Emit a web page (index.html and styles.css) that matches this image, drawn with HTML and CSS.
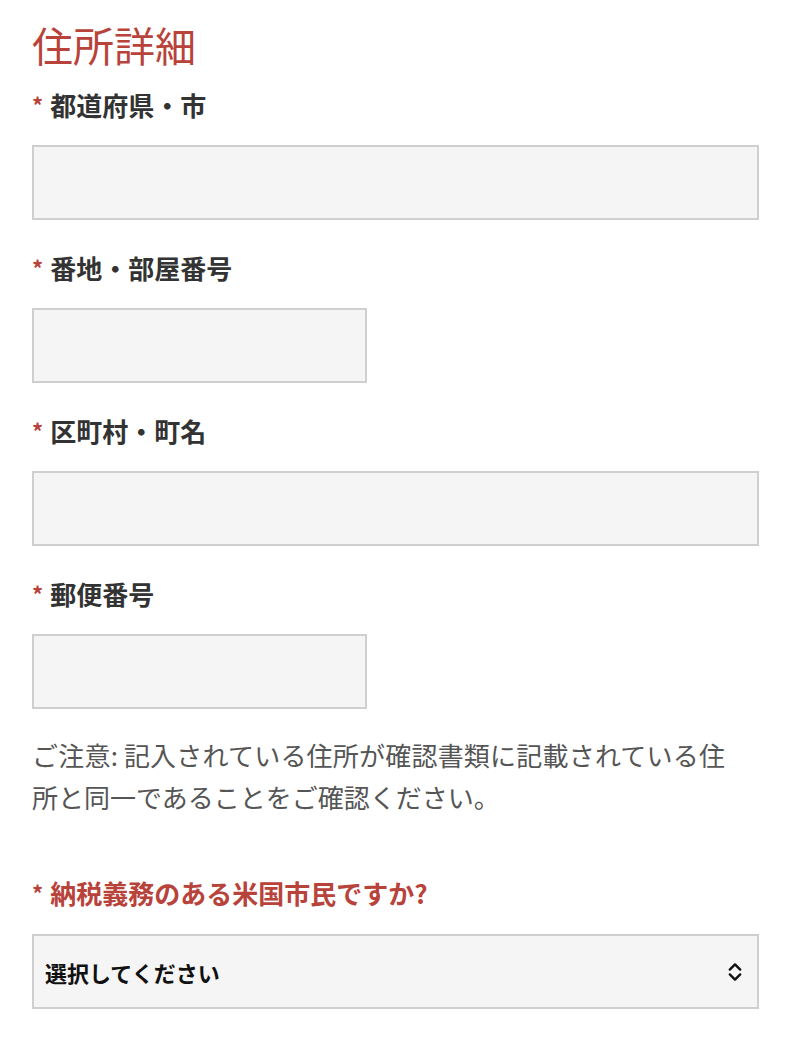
FILE: index.html
```html
<!DOCTYPE html>
<html lang="ja">
<head>
<meta charset="utf-8">
<link rel="stylesheet" href="styles.css">
</head>
<body>
<main class="form">
  <h1 class="title">住所詳細</h1>

  <div class="field">
    <label class="label"><span class="req">*</span>都道府県・市</label>
    <div class="input full"></div>
  </div>

  <div class="field">
    <label class="label"><span class="req">*</span>番地・部屋番号</label>
    <div class="input half"></div>
  </div>

  <div class="field">
    <label class="label"><span class="req">*</span>区町村・町名</label>
    <div class="input full"></div>
  </div>

  <div class="field">
    <label class="label"><span class="req">*</span>郵便番号</label>
    <div class="input half"></div>
  </div>

  <p class="note">ご注意: 記入されている住所が確認書類に記載されている住所と同一であることをご確認ください。</p>

  <div class="field field-select">
    <label class="label label-red"><span class="req">*</span>納税義務のある米国市民ですか?</label>
    <div class="input full select">
      <span class="select-text">選択してください</span>
      <svg class="chev" width="14" height="20" viewBox="0 0 14 20" aria-hidden="true">
        <path d="M1.8 7.6 L7 2.4 L12.2 7.6" fill="none" stroke="#111" stroke-width="2.4" stroke-linecap="round" stroke-linejoin="round"/>
        <path d="M1.8 12.4 L7 17.6 L12.2 12.4" fill="none" stroke="#111" stroke-width="2.4" stroke-linecap="round" stroke-linejoin="round"/>
      </svg>
    </div>
  </div>
</main>
</body>
</html>
```

FILE: styles.css
```css
html, body {
  margin: 0;
  padding: 0;
  background: #ffffff;
}

body {
  font-family: "Noto Sans CJK JP", "Noto Sans", sans-serif;
}

.form {
  padding: 20px 45px 0 32px;
  display: flex;
  flex-direction: column;
}

.title {
  margin: 0;
  font-size: 41px;
  line-height: 48px;
  font-weight: 400;
  color: #b8433b;
}

.field {
  display: flex;
  flex-direction: column;
  margin-top: 21px;
}

.field + .field {
  margin-top: 32px;
}

.label {
  display: flex;
  align-items: center;
  font-size: 26px;
  line-height: 32px;
  font-weight: 700;
  color: #333333;
  margin-bottom: 24px;
}

.label-red {
  color: #b8433b;
}

.req {
  color: #b8433b;
  font-size: 22px;
  font-weight: 700;
  margin-right: 7px;
  position: relative;
  top: -1px;
}

.input {
  box-sizing: border-box;
  height: 75px;
  background: #f5f5f5;
  border: 2px solid #cfcfcf;
}

.full {
  width: 727px;
}

.half {
  width: 335px;
}

.note {
  margin: 25px 0 0 0;
  width: 693px;
  font-size: 26px;
  line-height: 42px;
  color: #555555;
  text-align: justify;
}

.field-select {
  margin-top: 59px;
}

.field-select .label {
  margin-bottom: 25px;
}

.select {
  display: flex;
  align-items: center;
  justify-content: space-between;
  padding: 0 15px 0 11px;
}

.select-text {
  font-size: 22px;
  font-weight: 700;
  color: #111111;
}

.chev {
  display: block;
}
```
